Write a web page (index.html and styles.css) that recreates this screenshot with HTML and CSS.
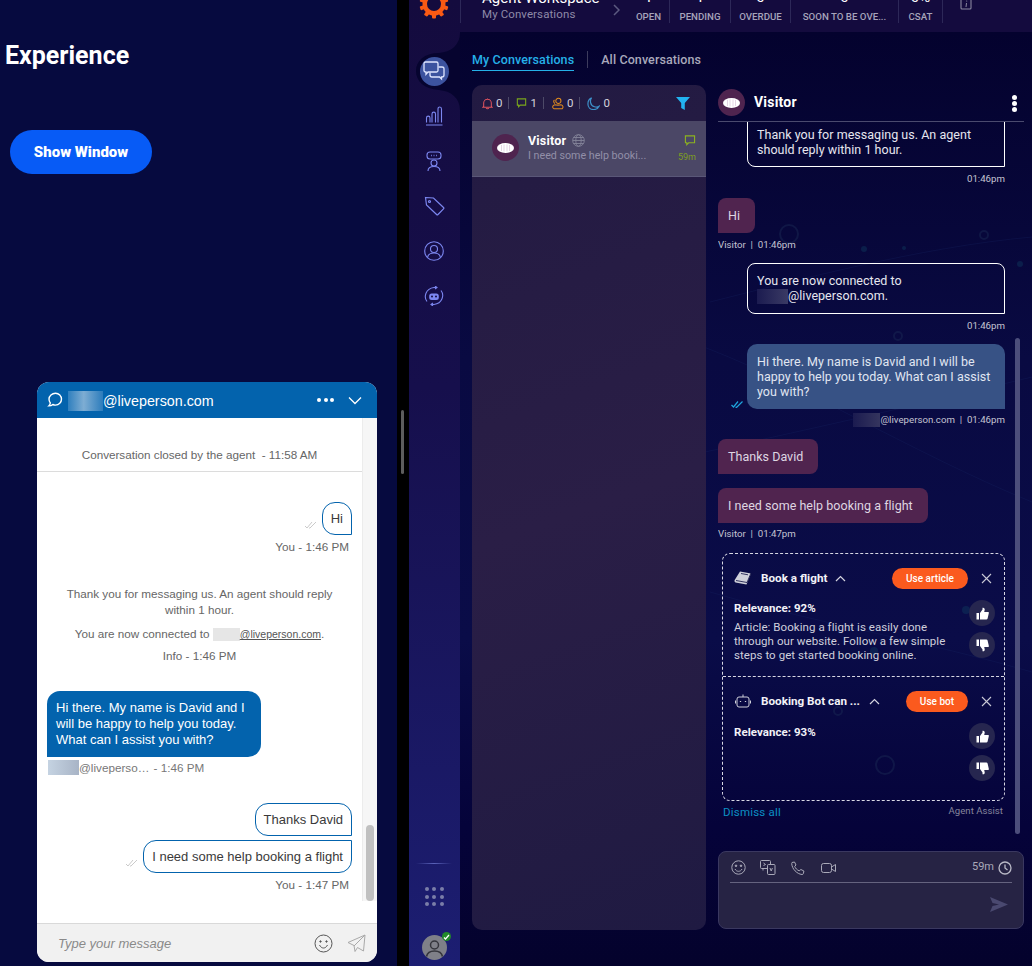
FILE: index.html
```html
<!DOCTYPE html>
<html lang="en">
<head>
<meta charset="utf-8">
<title>Agent Workspace</title>
<link rel="stylesheet" href="styles.css">
</head>
<body>
<section class="demo">
  <h1 class="demo-title">Experience</h1>
  <button class="show-btn">Show Window</button>
  <div class="widget">
    <header class="w-head">
      <svg class="w-chat-ico" width="18" height="18" viewBox="0 0 18 18" fill="none" stroke="#fff" stroke-width="1.4"><path d="M9.5 2.2c3.4 0 6 2.6 6 5.9s-2.6 6-6 6c-1 0-1.9-.2-2.7-.6-1 .9-2.300 1.400-4 1.400.9-.9 1.400-1.800 1.500-2.900-.9-1-1.300-2.400-1.300-3.900 0-3.300 3-5.900 6.500-5.900z"/></svg>
      <span class="w-agent"><span class="redact redact-head"></span>@liveperson.com</span>
      <span class="w-dots"><i></i><i></i><i></i></span>
      <svg class="w-chev" width="14" height="9" viewBox="0 0 14 9" fill="none" stroke="#fff" stroke-width="1.300"><path d="M1 1.500l6 6 6-6"/></svg>
    </header>
    <div class="w-body">
      <div class="w-msgs">
        <div class="w-closed">Conversation closed by the agent &nbsp;- 11:58 AM</div>
        <div class="w-row w-row-hi">
          <svg class="w-check" width="13" height="8" viewBox="0 0 13 8" fill="none" stroke="#c4c4c4" stroke-width=".9"><path d="M1 5l2 2 5-6M5 7l1 0 6-6"/></svg>
          <div class="w-out w-out-a">Hi</div>
        </div>
        <div class="w-stamp">You - 1:46 PM</div>
        <div class="w-sys w-sys-1">Thank you for messaging us. An agent should reply within 1 hour.</div>
        <div class="w-sys w-sys-2">You are now connected to <span class="redact redact-sys"></span><u>@liveperson.com</u>.</div>
        <div class="w-sys w-sys-3">Info - 1:46 PM</div>
        <div class="w-in">Hi there. My name is David and I will be happy to help you today. What can I assist you with?</div>
        <div class="w-in-meta"><span class="redact redact-meta"></span>@liveperso… <span class="w-in-time">- 1:46 PM</span></div>
        <div class="w-row w-row-thanks"><div class="w-out w-out-a">Thanks David</div></div>
        <div class="w-row w-row-need">
          <svg class="w-check" width="13" height="8" viewBox="0 0 13 8" fill="none" stroke="#c4c4c4" stroke-width=".9"><path d="M1 5l2 2 5-6M5 7l1 0 6-6"/></svg>
          <div class="w-out w-out-b">I need some help booking a flight</div>
        </div>
        <div class="w-stamp">You - 1:47 PM</div>
      </div>
      <div class="w-track"><div class="w-thumb"></div></div>
    </div>
    <footer class="w-input">
      <span class="w-place">Type your message</span>
      <svg width="19" height="19" viewBox="0 0 19 19" fill="none" stroke="#555" stroke-width="1"><circle cx="9.500" cy="9.500" r="8.500"/><path d="M5.500 11c1 2 2.500 3 4 3s3-1 4-3"/><circle cx="6.500" cy="7.500" r=".7" fill="#555"/><circle cx="12.500" cy="7.500" r=".7" fill="#555"/></svg>
      <svg class="w-send" width="19" height="19" viewBox="0 0 19 19" fill="none" stroke="#a8a8a8" stroke-width="1"><path d="M1 8.500L18 1l-1.500 16-6-3.500-2.500 4-1-6zM7 12l11-11"/></svg>
    </footer>
  </div>
</section>

<div class="gap"><div class="handle"></div></div>

<div class="app">
  <nav class="side">
    <svg class="notch" width="51" height="100" viewBox="0 0 51 100"><path fill="#06042f" d="M51 0C51 12 42 19 30 20 15 20 7 28 7 38s8 18 23 19c12 1 21 8 21 20z"/></svg>
    <svg class="logo" width="30" height="30" viewBox="0 0 30 30"><g fill="#fb5a14"><circle cx="15" cy="15" r="11.500"/><rect x="13" y="0.500" width="4" height="29" rx="1"/><rect x="13" y="0.500" width="4" height="29" rx="1" transform="rotate(36 15 15)"/><rect x="13" y="0.500" width="4" height="29" rx="1" transform="rotate(72 15 15)"/><rect x="13" y="0.500" width="4" height="29" rx="1" transform="rotate(108 15 15)"/><rect x="13" y="0.500" width="4" height="29" rx="1" transform="rotate(144 15 15)"/></g><circle cx="15" cy="15" r="7" fill="#140b3e"/></svg>
    <ul class="nav">
      <li class="nav-item"><span class="nav-active"><svg width="22" height="20" viewBox="0 0 22 20" fill="none" stroke="#dfe6ff" stroke-width="1.300"><path d="M2.500 1h11c.8 0 1.500.7 1.500 1.500v7c0 .8-.7 1.500-1.500 1.500H5l-2 2.200V11h-.5C1.700 11 1 10.300 1 9.500v-7C1 1.700 1.700 1 2.500 1z"/><path d="M15.500 6H19c1 0 2 .8 2 1.800v6.200c0 1-1 2-2 2h-.5v2L16.500 16H9c-1 0-2-1-2-2v-2.500"/></svg></span></li>
      <li class="nav-item"><svg width="18" height="20" viewBox="0 0 18 20" fill="none" stroke="#7c87f0" stroke-width="1.100"><path d="M1 19h16.500M1.500 16.500V12c0-2.500 3.500-2.500 3.500 0v4.500M7 16.500V8c0-2.500 3.500-2.500 3.500 0v8.500M13 16.500V3c0-2.700 3.500-2.700 3.500 0v13.500"/></svg></li>
      <li class="nav-item"><svg width="16" height="21" viewBox="0 0 16 21" fill="none" stroke="#7c87f0" stroke-width="1.100"><rect x="1" y="1" width="14" height="7" rx="3"/><path d="M5 4.500h.8M7.600 4.500h.8M10.200 4.500h.8" stroke-width="1.300"/><circle cx="8" cy="12" r="3"/><path d="M2 20c0-3 2.500-4.500 6-4.500s6 1.500 6 4.500"/></svg></li>
      <li class="nav-item"><svg width="21" height="20" viewBox="0 0 21 20" fill="none" stroke="#7c87f0" stroke-width="1.200"><path d="M1.500 1.500l8 .5 10 9.500c.4.400.4 1 0 1.400L14 18.500c-.4.400-1 .4-1.400 0L2.500 9z"/><circle cx="5.500" cy="5.500" r="1"/></svg></li>
      <li class="nav-item"><svg width="20" height="20" viewBox="0 0 20 20" fill="none" stroke="#7c87f0" stroke-width="1.100"><circle cx="10" cy="10" r="9.300"/><circle cx="10" cy="8" r="3.500"/><path d="M3.500 16.500c.5-3 3-4.500 6.500-4.500s6 1.500 6.500 4.500"/></svg></li>
      <li class="nav-item"><svg width="20" height="20" viewBox="0 0 20 20" fill="none" stroke="#7c87f0" stroke-width="1.100"><path d="M3 15.500C-.5 11 1.500 2.500 10 1.500l2.500 0M17 4.500c3.500 4.500 1.500 13-7 14H7.500"/><path d="M11 0l2 1.500-2 1.500M9 17l-2 1.500 2 1.500"/><rect x="5.200" y="7.500" width="9.600" height="6.500" rx="2.500" fill="#7c87f0" stroke="none"/><circle cx="8" cy="10.500" r="1" fill="#140b3e" stroke="none"/><circle cx="12" cy="10.500" r="1" fill="#140b3e" stroke="none"/></svg></li>
    </ul>
    <div class="side-foot">
      <div class="side-sep"></div>
      <div class="apps"><i></i><i></i><i></i><i></i><i></i><i></i><i></i><i></i><i></i></div>
      <div class="me">
        <svg width="25" height="25" viewBox="0 0 25 25"><circle cx="12.500" cy="12.500" r="12.500" fill="#7f8088"/><circle cx="12.500" cy="10" r="4" fill="none" stroke="#35353c" stroke-width="1.500"/><path d="M4.500 21.500c.8-4 4-5.500 8-5.500s7.200 1.500 8 5.500" fill="none" stroke="#35353c" stroke-width="1.600"/></svg>
        <span class="me-badge"><svg width="7" height="6" viewBox="0 0 7 6" fill="none" stroke="#fff" stroke-width="1.200"><path d="M1 3.500l1.500 1.500L6 1"/></svg></span>
      </div>
    </div>
  </nav>

  <main class="main">
    <header class="top">
      <div class="top-title">
        <div class="top-name">Agent Workspace</div>
        <div class="top-sub">My Conversations</div>
      </div>
      <svg class="top-chev" width="7" height="12" viewBox="0 0 7 12" fill="none" stroke="#5c5a80" stroke-width="1.500"><path d="M1 1l5 5-5 5"/></svg>
      <div class="stat stat-open"><b>1</b><span>OPEN</span></div>
      <div class="stat stat-pend"><b>1</b><span>PENDING</span></div>
      <div class="stat stat-over"><b>0</b><span>OVERDUE</span></div>
      <div class="stat stat-soon"><b>0</b><span>SOON TO BE OVE...</span></div>
      <div class="stat stat-csat"><b>0%</b><span>CSAT</span></div>
      <svg class="top-info" width="12" height="10" viewBox="0 0 12 10" fill="none" stroke="#8a889f" stroke-width="1.100"><path d="M1 -4v12c0 .6.400 1 1 1h8c.6 0 1-.4 1-1V-4"/><path d="M6.500 3L6 7" stroke-width="1"/><circle cx="6.700" cy="1" r=".6" fill="#8a889f" stroke="none"/></svg>
    </header>

    <div class="content">
      <svg class="deco" width="572" height="934" viewBox="0 0 572 934" fill="none">
        <g stroke="#1a2a68" stroke-width="1" opacity=".55">
          <path d="M250 270C330 250 460 215 572 205"/>
          <path d="M230 310C330 345 450 420 572 470"/>
          <path d="M245 420C360 395 470 370 572 345"/>
          <path d="M250 560C350 590 470 610 572 640"/>
        </g>
        <g stroke="#1b2b55" stroke-width="2">
          <circle cx="329" cy="202" r="9"/><circle cx="524" cy="203" r="4"/><circle cx="438" cy="304" r="4"/><circle cx="425" cy="733" r="9"/><circle cx="378" cy="679" r="4"/>
        </g>
        <g fill="#0f3a5e">
          <circle cx="404" cy="217" r="3"/><circle cx="364" cy="265" r="3"/><circle cx="444" cy="216" r="2"/><circle cx="560" cy="232" r="3"/><circle cx="506" cy="578" r="4"/><circle cx="414" cy="619" r="4"/>
        </g>
      </svg>
      <div class="tabs">
        <a class="tab tab-on">My Conversations</a>
        <span class="tab-sep"></span>
        <a class="tab">All Conversations</a>
      </div>
      <div class="panes">
        <aside class="list">
          <div class="counts">
            <span class="cnt"><svg width="11" height="13" viewBox="0 0 13 14" fill="none" stroke="#e2545f" stroke-width="1.200"><path d="M2 10.500V6.500C2 4 4 2 6.500 2S11 4 11 6.500v4l1 1H1zM5 12.500c.3 1 2.700 1 3 0M6.500 1v1"/></svg>0</span>
            <span class="cnt"><svg width="11" height="10" viewBox="0 0 13 12" fill="none" stroke="#7aa61c" stroke-width="1.300"><path d="M1.500 1h10v7.500H5L3 10.500V8.500H1.500z"/></svg>1</span>
            <span class="cnt"><svg width="13" height="13" viewBox="0 0 15 14" fill="none" stroke="#e08a1e" stroke-width="1.200"><circle cx="8.500" cy="4" r="3"/><path d="M3.500 13c-2.500-1-2-4 1-4.500 1 .5 6 .5 7 0 2.500.5 3 3 1.500 4.500z"/><path d="M4 3c-1.500 1-1 3 .5 4"/></svg>0</span>
            <span class="cnt cnt-last"><svg width="13" height="13" viewBox="0 0 14 14" fill="none" stroke="#3c8fc8" stroke-width="1.300"><path d="M5 1C3 3 3 9 8 10.500c2 .6 4 .2 5-.5-1 2.400-3.500 3.500-6 3.500C3.500 13.500 1 11 1 7.500 1 4.500 2.500 2 5 1z"/></svg>0</span>
            <svg class="filter" width="14" height="13" viewBox="0 0 14 13"><path fill="#22b3f0" d="M0 0h14L8.800 6v7L5.200 11V6z"/></svg>
          </div>
          <div class="conv">
            <span class="ava ava-sm"><svg width="17" height="10" viewBox="0 0 17 10"><ellipse cx="8.500" cy="5" rx="8.500" ry="5" fill="#fff"/><path d="M4.500 2v6M7 1.500v7M10 1.500v7M12.500 2v6" stroke="#caa9c8" stroke-width=".5"/></svg></span>
            <div class="conv-main">
              <div class="conv-name">Visitor<svg width="13" height="13" viewBox="0 0 13 13" fill="none" stroke="#85849a" stroke-width=".9"><circle cx="6.500" cy="6.500" r="5.800"/><ellipse cx="6.500" cy="6.500" rx="2.700" ry="5.800"/><path d="M.7 6.500h11.600M1.500 3.500h10M1.500 9.500h10"/></svg></div>
              <div class="conv-text">I need some help booki...</div>
            </div>
            <div class="conv-side">
              <svg width="12" height="11" viewBox="0 0 13 12" fill="none" stroke="#8cb31f" stroke-width="1.200"><path d="M1.500 1h10v7.500H5L3 10.500V8.500H1.500z"/></svg>
              <span>59m</span>
            </div>
          </div>
        </aside>

        <section class="chat">
          <header class="chat-head">
            <span class="ava ava-lg"><svg width="17" height="10" viewBox="0 0 17 10"><ellipse cx="8.500" cy="5" rx="8.500" ry="5" fill="#fff"/><path d="M4.500 2v6M7 1.500v7M10 1.500v7M12.500 2v6" stroke="#caa9c8" stroke-width=".5"/></svg></span>
            <span class="chat-name">Visitor</span>
            <span class="kebab"><i></i><i></i><i></i></span>
          </header>
          <div class="msgs">
            <div class="sysb sysb-first">Thank you for messaging us. An agent should reply within 1 hour.</div>
            <div class="time">01:46pm</div>
            <div class="vis vis-hi">Hi</div>
            <div class="meta">Visitor &nbsp;|&nbsp; 01:46pm</div>
            <div class="sysb sysb-conn">You are now connected to<br><span class="redact redact-dark"></span>@liveperson.com.</div>
            <div class="time">01:46pm</div>
            <div class="agent-wrap">
              <svg class="dbl" width="13" height="7" viewBox="0 0 13 7" fill="none" stroke="#1ea5dd" stroke-width="1.200"><path d="M.5 4l2 2 4.500-5.500M4.500 6l1 .5L11.500.5"/></svg>
              <div class="agent">Hi there. My name is David and I will be happy to help you today. What can I assist you with?</div>
            </div>
            <div class="time time-agent"><span class="redact redact-dark2"></span>@liveperson.com &nbsp;|&nbsp; 01:46pm</div>
            <div class="vis vis-thanks">Thanks David</div>
            <div class="vis vis-need">I need some help booking a flight</div>
            <div class="meta meta-last">Visitor &nbsp;|&nbsp; 01:47pm</div>

            <div class="assist">
              <div class="aa aa-first">
                <div class="aa-head">
                  <svg class="aa-ico" width="18" height="15" viewBox="0 0 18 15"><path fill="#cfd0da" d="M6 .5l11 2-4.500 11L1.500 11.500C.5 11 .2 10 .7 9z"/><path fill="none" stroke="#0b0c3f" stroke-width=".8" d="M2 9.500l11 2 4-9.500M7 2.500l7 1.300"/></svg>
                  <span class="aa-title">Book a flight</span>
                  <svg class="aa-chev" width="11" height="7" viewBox="0 0 11 7" fill="none" stroke="#d5d5e0" stroke-width="1.200"><path d="M1 6l4.500-4.500L10 6"/></svg>
                  <span class="use use-article">Use article</span>
                  <svg class="aa-x" width="11" height="11" viewBox="0 0 11 11" stroke="#c9c9d6" stroke-width="1.100"><path d="M1 1l9 9M10 1l-9 9"/></svg>
                </div>
                <div class="aa-body">
                  <div class="aa-text">
                    <div class="rel">Relevance: 92%</div>
                    <p class="art">Article: Booking a flight is easily done through our website. Follow a few simple steps to get started booking online.</p>
                  </div>
                  <div class="thumbs">
                    <span class="thumb"><svg width="13" height="13" viewBox="0 0 13 13"><path fill="#fff" d="M.5 6h2.500v6.500H.5zM4 6l2.500-3.500V.8c1.300-.6 2.500.6 2.200 2L8.200 5H12c.8 0 1 .7.800 1.300l-1.200 5.200c-.2.700-.6 1-1.300 1H4z"/></svg></span>
                    <span class="thumb"><svg width="13" height="13" viewBox="0 0 13 13"><path fill="#fff" d="M.5 7h2.500V.5H.5zM4 7l2.500 3.500v1.700c1.300.6 2.500-.6 2.200-2L8.200 8H12c.8 0 1-.7.800-1.300L11.600 1.500c-.2-.7-.6-1-1.300-1H4z"/></svg></span>
                  </div>
                </div>
              </div>
              <div class="aa">
                <div class="aa-head">
                  <svg class="aa-ico" width="16" height="14" viewBox="0 0 16 14" fill="none" stroke="#cfd0da" stroke-width="1"><rect x="2" y="3" width="12" height="10" rx="2"/><path d="M8 3V.5M.5 6.500v3M15.500 6.500v3"/><path d="M5.500 7v1M10.500 7v1" stroke-width="1.300"/></svg>
                  <span class="aa-title">Booking Bot can ...</span>
                  <svg class="aa-chev aa-chev-2" width="11" height="7" viewBox="0 0 11 7" fill="none" stroke="#d5d5e0" stroke-width="1.200"><path d="M1 6l4.500-4.500L10 6"/></svg>
                  <span class="use use-bot">Use bot</span>
                  <svg class="aa-x" width="11" height="11" viewBox="0 0 11 11" stroke="#c9c9d6" stroke-width="1.100"><path d="M1 1l9 9M10 1l-9 9"/></svg>
                </div>
                <div class="aa-body">
                  <div class="aa-text"><div class="rel rel-2">Relevance: 93%</div></div>
                  <div class="thumbs">
                    <span class="thumb"><svg width="13" height="13" viewBox="0 0 13 13"><path fill="#fff" d="M.5 6h2.500v6.500H.5zM4 6l2.500-3.500V.8c1.300-.6 2.500.6 2.200 2L8.200 5H12c.8 0 1 .7.800 1.300l-1.200 5.200c-.2.700-.6 1-1.300 1H4z"/></svg></span>
                    <span class="thumb"><svg width="13" height="13" viewBox="0 0 13 13"><path fill="#fff" d="M.5 7h2.500V.5H.5zM4 7l2.500 3.500v1.700c1.300.6 2.500-.6 2.200-2L8.200 8H12c.8 0 1-.7.800-1.300L11.600 1.500c-.2-.7-.6-1-1.300-1H4z"/></svg></span>
                  </div>
                </div>
              </div>
            </div>
            <div class="aa-foot"><a class="dismiss">Dismiss all</a><span class="aa-label">Agent Assist</span></div>
            <div class="bar"></div>
          </div>
          <div class="composer">
            <div class="tools">
              <svg width="15" height="15" viewBox="0 0 15 15" fill="none" stroke="#a9a9b8" stroke-width="1"><circle cx="7.500" cy="7.500" r="6.700"/><path d="M4 9c.8 1.600 2 2.300 3.500 2.300S10.200 10.600 11 9"/><circle cx="5" cy="5.800" r=".8" fill="#a9a9b8"/><circle cx="10" cy="5.800" r=".8" fill="#a9a9b8"/></svg>
              <svg class="t-2" width="16" height="15" viewBox="0 0 16 15" fill="none" stroke="#a9a9b8" stroke-width="1"><rect x=".5" y=".5" width="10" height="8" rx="1"/><path d="M3 10.500v-2h2"/><rect x="7.500" y="4.500" width="7.500" height="10" rx="1" fill="#262344"/><path d="M3.500 3l2 1.500-2 1M10 8l1.200 3 1.200-3"/></svg>
              <svg class="t-3" width="14" height="14" viewBox="0 0 14 14" fill="none" stroke="#a9a9b8" stroke-width="1"><path d="M1 1.500L3.500 1l1.500 3-1.300 1.300c.7 2 2.300 3.700 4.500 4.500L9.900 8.500l3 1.500-.5 2.500c-.2.800-.8 1-1.400 1C6 13 1 8 .7 2.500c0-.4 0-.8.300-1z"/></svg>
              <svg class="t-4" width="15" height="10" viewBox="0 0 15 10" fill="none" stroke="#a9a9b8" stroke-width="1"><rect x=".5" y=".5" width="10" height="9" rx="2"/><path d="M10.500 4l4-2.500v7l-4-2.500"/></svg>
              <span class="sla">59m</span>
              <svg width="14" height="14" viewBox="0 0 14 14" fill="none" stroke="#b9b9c6" stroke-width="1.300"><circle cx="7" cy="7" r="6"/><path d="M7 3.500V7l2.500 2"/></svg>
            </div>
            <div class="comp-body">
              <svg width="18" height="15" viewBox="0 0 18 15"><path fill="#4a4970" d="M0 0l18 7.500L0 15l2.500-6L9 7.500 2.500 6z"/></svg>
            </div>
          </div>
        </section>
      </div>
    </div>
  </main>
</div>
</body>
</html>
```
FILE: styles.css
```css
* { box-sizing: border-box; }
html, body { margin: 0; height: 966px; overflow: hidden; }
body { display: flex; background: #000; font-family: Roboto, sans-serif; }
i { display: block; font-style: normal; }
ul { list-style: none; margin: 0; padding: 0; }

.redact { display: inline-block; vertical-align: middle; }
.redact-head { width: 35px; height: 20px; background: linear-gradient(90deg, #2f7fbe, #7eadd3 45%, #2c7cbc); }
.redact-sys { width: 27px; height: 13px; background: #e6e6e6; }
.redact-meta { width: 31px; height: 15px; background: linear-gradient(90deg, #c5d3e2, #a8b4c6); }
.redact-dark { width: 31px; height: 15px; background: linear-gradient(90deg, #1b1b50, #3a3a64); }
.redact-dark2 { width: 27px; height: 14px; background: linear-gradient(90deg, #1b1b50, #35355e); }

/* left demo page */
.demo { width: 397px; flex: none; background: #060a3f; padding-top: 42px; }
.demo-title { margin: 0 0 0 5px; font: 700 25px/28px Roboto, sans-serif; color: #fff; }
.show-btn { display: block; margin: 60px 0 208px 10px; width: 142px; height: 44px; border: 0; border-radius: 22px; background: #075bf6; color: #fff; font: 900 15px Roboto, sans-serif; }

.widget { margin-left: 37px; width: 340px; height: 580px; border-radius: 12px; background: #fff; overflow: hidden; font-family: "Liberation Sans", Arial, sans-serif; display: flex; flex-direction: column; }
.w-head { height: 36px; flex: none; background: #0363ad; color: #fff; display: flex; align-items: center; padding: 0 15px 0 9px; }
.w-chat-ico { margin-right: 4px; }
.w-agent { font-size: 14.300px; flex: 1; display: flex; align-items: center; padding-top: 1px; }
.w-dots { display: flex; gap: 2.500px; margin-right: 14px; }
.w-dots i { width: 4px; height: 4px; border-radius: 50%; background: #fff; }

.w-body { flex: 1; display: flex; min-height: 0; }
.w-msgs { width: 325px; flex: none; padding: 30px 10px 0; color: #666; font-size: 11.700px; }
.w-closed { margin: 0 -10px; padding-bottom: 9px; border-bottom: 1px solid #dcdcdc; text-align: center; line-height: 14px; font-size: 11.700px; color: #666; height: 24px; }
.w-row { display: flex; justify-content: flex-end; align-items: flex-end; }
.w-row-hi { margin-top: 30px; }
.w-row-thanks { margin-top: 28px; }
.w-row-need { margin-top: 4px; }
.w-check { margin: 0 5px 6px 0; }
.w-out { height: 33px; padding: 0 8px; border: 1px solid #0363ad; color: #3a3a3a; font-size: 13px; line-height: 31px; }
.w-out-a { border-radius: 13px 13px 0 13px; }
.w-out-b { border-radius: 13px 0 13px 13px; }
.w-stamp { margin-top: 5px; padding-right: 3px; text-align: right; line-height: 14px; color: #666; }
.w-sys { text-align: center; line-height: 16px; color: #666; }
.w-sys-1 { margin-top: 32px; padding: 0 10px; }
.w-sys-2 { margin-top: 8px; padding: 0; }
.w-sys-3 { margin-top: 6px; padding: 0; }
.w-sys u { color: #555; font-size: 10.500px; }
.w-in { width: 214px; margin-top: 27px; padding: 9px; background: #0363ad; color: #fff; border-radius: 13px 13px 13px 0; font-size: 13px; line-height: 16px; }
.w-in-meta { margin-top: 3px; display: flex; align-items: center; white-space: pre; padding-left: 1px; line-height: 14px; height: 15px; color: #777; }
.w-in-time { margin-left: 1px; }
.w-track { width: 15px; height: 483px; background: #f6f6f6; border-left: 1px solid #ececec; display: flex; align-items: flex-end; padding-left: 3px; }
.w-thumb { width: 8px; height: 76px; border-radius: 4px; background: #c0c0c0; }
.w-input { height: 39px; flex: none; background: #f1f1f1; border-top: 1px solid #d9d9d9; display: flex; align-items: center; padding: 0 11px 0 21px; gap: 14px; }
.w-place { flex: 1; font-style: italic; font-size: 13px; color: #8a8a8a; }

/* divider */
.gap { width: 12px; flex: none; background: #000; padding: 410px 0 0 4px; }
.handle { width: 3px; height: 64px; border-radius: 2px; background: #5d5d5d; }

/* app */
.app { flex: 1; display: flex; min-width: 0; }
.side { width: 51px; flex: none; position: relative; background: linear-gradient(180deg, #140b3e 0%, #160f4c 40%, #1c1e72 100%); display: flex; flex-direction: column; align-items: center; }
.notch { position: absolute; left: 0; top: 33px; }
.logo { margin: -11px 1px 0 0; position: relative; flex: none; }
.nav { position: relative; margin-top: 29.500px; width: 100%; }
.nav-item { height: 45px; display: flex; align-items: center; justify-content: center; padding-right: 1px; }
.nav-active { width: 29px; height: 29px; border-radius: 50%; background: #3c539f; display: flex; align-items: center; justify-content: center; }
.side-foot { margin-top: auto; display: flex; flex-direction: column; align-items: center; padding-bottom: 6px; }
.side-sep { width: 36px; height: 1px; margin-right: 1px; background: linear-gradient(90deg, transparent, #5a62b8, transparent); }
.apps { display: grid; grid-template-columns: repeat(3, 4px); gap: 3.500px; margin: 23px 1px 29px 0; }
.apps i { width: 4px; height: 4px; border-radius: 50%; background: #7a7ea8; }
.me { position: relative; width: 25px; height: 25px; margin-right: 1px; }
.me svg { display: block; }
.me-badge { position: absolute; right: -4px; top: -3px; width: 9px; height: 9px; border-radius: 50%; background: #228a2a; display: flex; align-items: center; justify-content: center; }

.main { flex: 1; min-width: 0; display: flex; flex-direction: column; }
.top { height: 32px; flex: none; background: #140b3e; display: flex; align-items: flex-end; padding-bottom: 9px; overflow: hidden; }
.top-title { width: 153px; height: 23px; padding-left: 21px; border-left: 1px solid #2d2858; display: flex; flex-direction: column; justify-content: flex-end; padding-bottom: 2px; }
.top-name { color: #fff; font-size: 15px; line-height: 18px; white-space: nowrap; }
.top-sub { color: #8e8aa8; font-size: 11.500px; line-height: 14px; letter-spacing: .1px; }
.top-chev { flex: none; align-self: flex-start; margin-top: 4px; }
.stat { height: 23px; display: flex; flex-direction: column; justify-content: flex-end; align-items: center; border-right: 1px solid #2d2858; color: #a6a4bb; flex: none; }
.stat b { font-weight: 400; font-size: 15px; line-height: 16px; color: #fff; margin-bottom: 6px; }
.stat span { font-size: 9.700px; font-weight: 500; line-height: 12px; white-space: nowrap; }
.stat-open { width: 46px; margin-left: 4px; padding-left: 4px; }
.stat-pend { width: 61px; }
.stat-over { width: 60px; }
.stat-soon { width: 108px; }
.stat-csat { width: 44px; }
.top-info { align-self: flex-start; margin: 0 0 0 17px; }

.content { flex: 1; min-height: 0; position: relative; background: linear-gradient(180deg, #04022e 0%, #090a42 35%, #0a0c48 65%, #05033a 85%, #04022c 100%); padding: 18px 8px 0 12px; }
.deco { position: absolute; left: 0; top: 0; opacity: .45; }
.tabs { position: relative; height: 35px; display: flex; align-items: flex-start; }
.tab { font-size: 12.500px; font-weight: 500; line-height: 20px; color: #a9a9bb; letter-spacing: .1px; }
.tab-on { color: #25b0e8; height: 21px; border-bottom: 1px solid #25b0e8; }
.tab-sep { width: 1px; height: 17px; margin: 1px 13px 0; background: #3d3c5d; }
.panes { position: relative; display: flex; gap: 12px; height: 845px; }

.list { width: 234px; flex: none; border-radius: 10px; background: linear-gradient(160deg, #221a42, #2a1e46 50%, #1f1a42); overflow: hidden; }
.counts { height: 36px; display: flex; align-items: center; padding: 0 16px 0 10px; }
.cnt { display: flex; align-items: center; gap: 3px; color: #d3d2dc; font-size: 11.500px; padding-right: 6px; margin-right: 7px; border-right: 1px solid #4d4a68; height: 12px; }
.cnt-last { border-right: 0; }
.filter { margin-left: auto; }
.conv { height: 56px; background: #4b4766; border-bottom: 1px solid #5a5778; display: flex; padding: 12px 10px 0 20px; }
.ava { border-radius: 50%; background: #4f244f; display: flex; align-items: center; justify-content: center; flex: none; }
.ava-sm { width: 27px; height: 27px; margin-top: 1px; }
.ava-lg { width: 27px; height: 27px; margin-top: 4px; }
.conv-main { margin-left: 9px; flex: 1; min-width: 0; }
.conv-name { display: flex; align-items: center; gap: 6px; color: #fff; font-weight: 700; font-size: 12.500px; line-height: 15px; letter-spacing: .2px; }
.conv-text { color: #928fa8; font-size: 10.700px; line-height: 15px; white-space: nowrap; }
.conv-side { display: flex; flex-direction: column; align-items: flex-end; gap: 6px; color: #7f9f1f; font-size: 9px; line-height: 10px; padding-top: 2px; }

.chat { width: 306px; flex: none; display: flex; flex-direction: column; }
.chat-head { height: 37px; flex: none; display: flex; align-items: flex-start; border-bottom: 1px solid #4a4a6e; }
.chat-name { margin-left: 9px; font-weight: 700; font-size: 14px; line-height: 34px; color: #fff; letter-spacing: .2px; }
.kebab { margin-left: auto; margin-right: 7px; margin-top: 10px; display: flex; flex-direction: column; gap: 1px; }
.kebab i { width: 5px; height: 5px; border-radius: 50%; background: #fff; }

.msgs { height: 714px; position: relative; overflow: hidden; padding-right: 19px; font-size: 12.500px; line-height: 15px; color: #dcdce8; letter-spacing: .03px; }
.sysb { margin-left: 29px; border: 1px solid #fff; padding: 9px; border-radius: 0 0 0 8px; color: #e6e6ef; }
.sysb-first { margin-top: -5px; padding-top: 9px; }
.sysb-conn { margin-top: 11px; border-radius: 8px 8px 0 8px; }
.time { margin-top: 5px; text-align: right; font-size: 9.700px; line-height: 14px; color: #c4c4d2; letter-spacing: 0; }
.vis { width: fit-content; min-width: 36px; padding: 10px 15px 10px 10px; background: #50244f; border-radius: 8px 8px 8px 0; color: #dfd6e2; }
.vis-hi { margin-top: 12px; }
.vis-thanks { margin-top: 12px; }
.vis-need { margin-top: 14px; }
.meta { margin-top: 5px; font-size: 9.700px; line-height: 14px; color: #c4c4d2; letter-spacing: 0; }
.meta-last { margin-top: 4px; }
.agent-wrap { margin-top: 11px; position: relative; }
.agent { margin-left: 29px; padding: 10px; background: #375285; color: #e0e6f2; border-radius: 10px 10px 0 10px; }
.dbl { position: absolute; left: 13px; bottom: 1px; }
.time-agent { margin-top: 4px; display: flex; justify-content: flex-end; align-items: center; white-space: pre; }

.assist { margin: 12px 0 0 4px; height: 248px; border: 1px dashed #d8d8e4; border-radius: 8px; }
.aa { height: 123px; padding: 13px 12px 0 11px; }
.aa-first { border-bottom: 1px dashed #d8d8e4; }
.aa-head { display: flex; align-items: center; height: 22px; }
.aa-ico { flex: none; width: 18px; }
.aa-title { margin-left: 9px; color: #f2f2f7; font-weight: 700; font-size: 11.700px; white-space: nowrap; letter-spacing: 0; }
.aa-chev { margin-left: 8px; }
.aa-chev-2 { margin-left: 9px; }
.use { margin-left: auto; height: 21px; border-radius: 11px; background: #fb5a1e; color: #fff; font-weight: 500; font-size: 10px; line-height: 21px; text-align: center; }
.use-article { width: 76px; }
.use-bot { width: 62px; }
.aa-x { margin-left: 13px; flex: none; }
.aa-body { display: flex; justify-content: space-between; margin-top: 11px; }
.aa-text { width: 222px; }
.rel { margin-top: 1px; font-size: 11.500px; font-weight: 700; line-height: 14px; color: #f2f2f7; letter-spacing: .05px; }
.rel-2 { margin-top: 2px; }
.art { margin: 5px 0 0; font-size: 11.500px; line-height: 14px; color: #cfcfdc; letter-spacing: .06px; }
.thumbs { display: flex; flex-direction: column; gap: 6px; margin-right: -3px; }
.thumb { width: 26px; height: 26px; border-radius: 50%; background: #26264f; display: flex; align-items: center; justify-content: center; }
.aa-foot { display: flex; justify-content: space-between; align-items: center; margin: 2px 2px 0 5px; }
.dismiss { color: #0b8fc4; font-size: 11.500px; letter-spacing: .2px; }
.aa-label { color: #85859c; font-size: 9.600px; padding-bottom: 3px; }
.bar { position: absolute; right: 4px; top: 216px; width: 5px; height: 496px; border-radius: 3px; background: #4c4e7b; }

.composer { margin-top: 15px; height: 78px; border: 1px solid #3a3860; border-radius: 8px; background: #262344; padding: 0 11px; flex: none; }
.tools { height: 31px; display: flex; align-items: center; border-bottom: 1px solid #65637f; padding-left: 1px; padding-top: 1px; }
.t-2 { margin-left: 14px; }
.t-3 { margin-left: 15px; }
.t-4 { margin-left: 16px; }
.sla { margin-left: auto; margin-right: 4px; margin-bottom: 3px; color: #a9a9b8; font-size: 11px; }
.comp-body { display: flex; justify-content: flex-end; padding: 14px 4px 0 0; }
```
